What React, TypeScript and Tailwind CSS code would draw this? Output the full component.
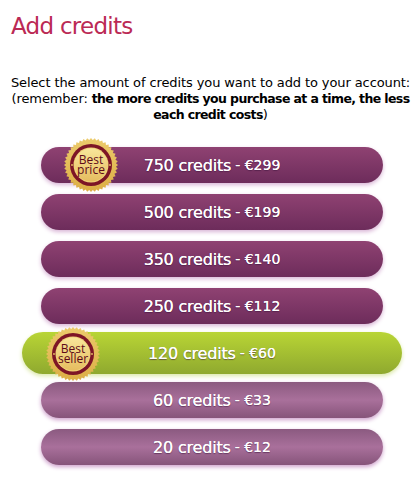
const font = { fontFamily: '"DejaVu Sans", sans-serif' };
const labelShadow = { textShadow: "0 0 0.6px #fff, 0 1px 1px rgba(60,20,60,.55)" };

function Seal({ top, bottom, id }: { top: string; bottom: string; id: string }) {
  const teeth: string[] = [];
  const n = 44;
  for (let i = 0; i < n * 2; i++) {
    const a = (i * Math.PI) / n;
    const r = i % 2 === 0 ? 27 : 25;
    teeth.push(`${(27 + r * Math.cos(a)).toFixed(2)},${(27 + r * Math.sin(a)).toFixed(2)}`);
  }
  return (
    <div className="relative w-[54px] h-[54px]">
      <svg width="54" height="54" viewBox="0 0 54 54" className="absolute inset-0">
        <defs>
          <linearGradient id={`${id}g`} x1="0" y1="0" x2="0" y2="1">
            <stop offset="0" stopColor="#eccb6c" />
            <stop offset="1" stopColor="#dcae45" />
          </linearGradient>
          <linearGradient id={`${id}c`} x1="0" y1="0" x2="0" y2="1">
            <stop offset="0" stopColor="#f8e69a" />
            <stop offset="1" stopColor="#e6bd60" />
          </linearGradient>
        </defs>
        <polygon points={teeth.join(" ")} fill={`url(#${id}g)`} />
        <circle cx="27" cy="27" r="21" fill="#7d1526" />
        <circle cx="27" cy="27" r="17.5" fill="#f0d27a" />
        <circle cx="27" cy="27" r="16.5" fill={`url(#${id}c)`} />
        <circle cx="8" cy="27" r="0.9" fill="#e8c468" />
        <circle cx="46" cy="27" r="0.9" fill="#e8c468" />
      </svg>
      <div
        className="absolute inset-0 flex flex-col items-center justify-center text-[#5e0a18] text-[12px] leading-[10px] font-normal"
        style={{ fontFamily: '"Open Sans", sans-serif' }}
      >
        <span>{top}</span>
        <span>{bottom}</span>
      </div>
    </div>
  );
}

function Row({ credits, price, variant, seal, mt }: { credits: string; price: string; variant: "dark" | "light" | "green"; seal?: [string, string]; mt: string }) {
  const cls =
    variant === "dark"
      ? "w-[342px] h-[36px] rounded-[18px] bg-[linear-gradient(#8f4272,#6d2c5b)] shadow-[0_2px_4px_#d9b4d6]"
      : variant === "light"
        ? "w-[342px] h-[36px] rounded-[18px] bg-[linear-gradient(#8b5a80,#a9709b_50%,#86547a)] shadow-[0_2px_4px_#cfa0cd]"
        : "w-[380px] h-[42px] rounded-[21px] bg-[linear-gradient(#b9d535,#8fa92f)] shadow-[0_2px_4px_#dbe8a8]";
  return (
    <div className={`relative flex items-center justify-center pt-[1px] text-white ${cls} ${mt}`}>
      {seal && (
        <div className={variant === "green" ? "absolute left-[24px] top-[-5px]" : "absolute left-[23px] top-[-9px]"}>
          <Seal top={seal[0]} bottom={seal[1]} id={seal[1]} />
        </div>
      )}
      <span className="text-[16px] tracking-[-0.2px]" style={labelShadow}>
        {credits} credits
      </span>
      <span className="text-[14px] ml-[4px]" style={labelShadow}>
        - €{price}
      </span>
    </div>
  );
}

export default function App() {
  return (
    <div className="w-[411px] h-[480px] bg-white overflow-hidden" style={font}>
      <h1 className="text-[23px] leading-[28px] text-[#bb2a55] pl-[11px] pt-[12px] font-normal tracking-[-0.73px]">Add credits</h1>
      <p className="mt-[35px] text-[13px] leading-[16px] text-black text-center whitespace-nowrap flex flex-col items-center ml-[5px] w-[411px]">
        <span className="tracking-[-0.1px]">Select the amount of credits you want to add to your account:</span>
        <span className="tracking-[-0.1px]">
          (remember: <b className="text-[12.5px] tracking-[-0.62px]">the more credits you purchase at a time, the less</b>
        </span>
        <span>
          <b className="text-[12.5px] tracking-[-0.62px]">each credit costs</b>)
        </span>
      </p>
      <div className="mt-[24px] pl-[13px] flex flex-col items-center">
        <Row credits="750" price="299" variant="dark" seal={["Best", "price"]} mt="" />
        <Row credits="500" price="199" variant="dark" mt="mt-[11px]" />
        <Row credits="350" price="140" variant="dark" mt="mt-[11px]" />
        <Row credits="250" price="112" variant="dark" mt="mt-[11px]" />
        <Row credits="120" price="60" variant="green" seal={["Best", "seller"]} mt="mt-[8px]" />
        <Row credits="60" price="33" variant="light" mt="mt-[8px]" />
        <Row credits="20" price="12" variant="light" mt="mt-[11px]" />
      </div>
    </div>
  );
}
